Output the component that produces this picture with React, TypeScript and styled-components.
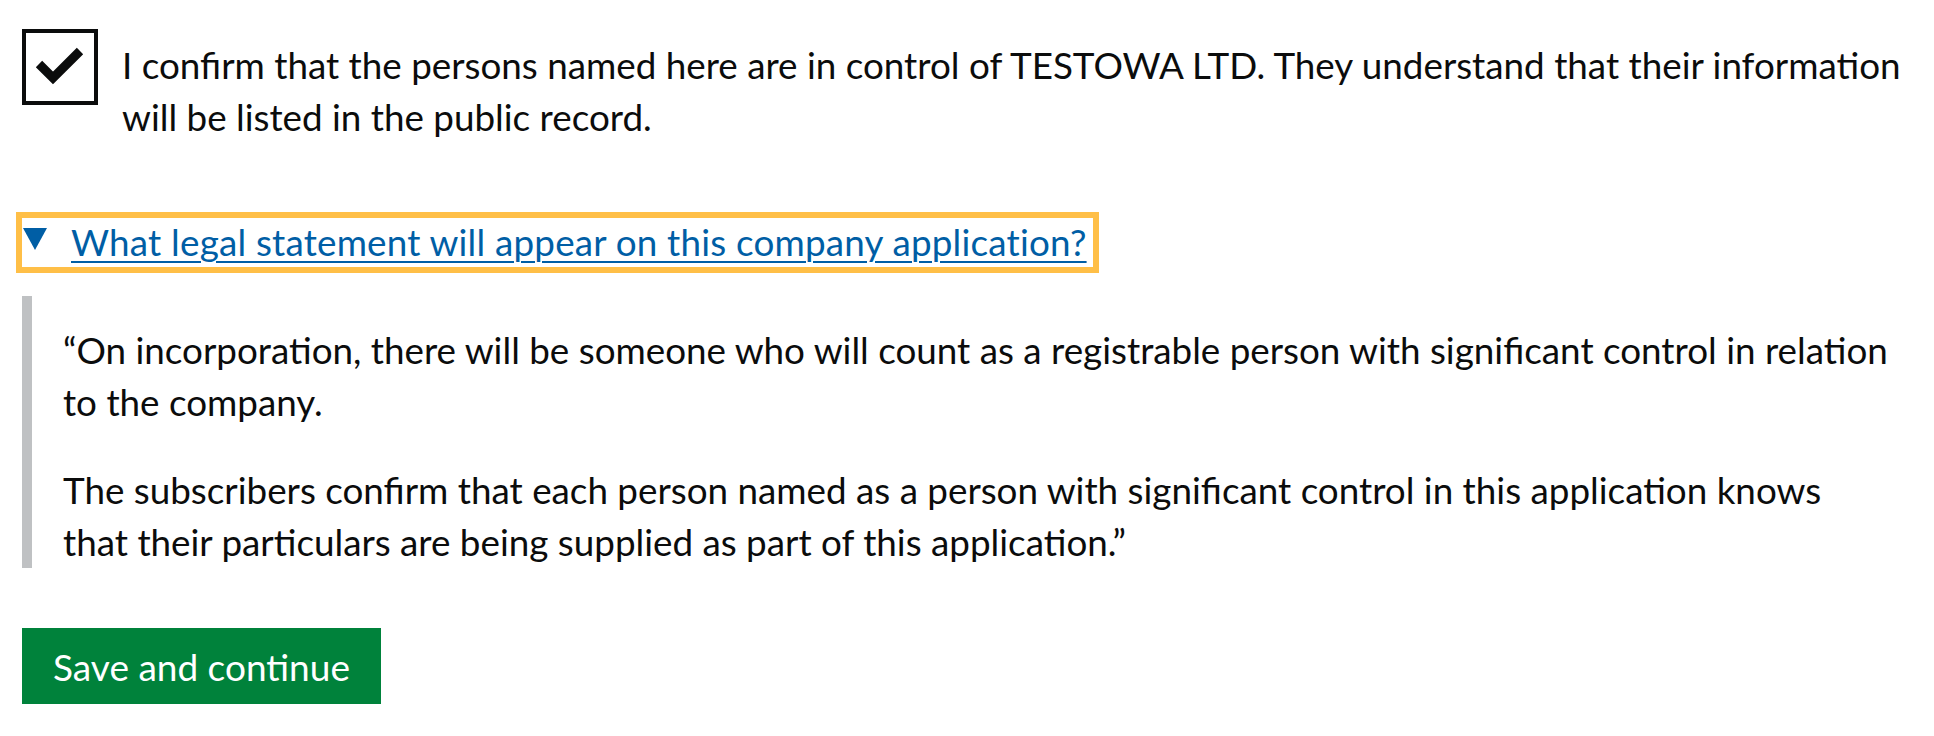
import React from 'react'
import styled, { createGlobalStyle } from 'styled-components'

const GlobalStyle = createGlobalStyle`
  html, body {
    margin: 0;
    padding: 0;
    background: #ffffff;
  }
  body {
    font-family: Lato, "Noto Sans", Arial, sans-serif;
    color: #0b0c0c;
    -webkit-font-smoothing: antialiased;
  }
`

const Page = styled.main`
  padding: 29px 22px 0 22px;
`

const CheckboxRow = styled.div`
  display: flex;
  align-items: flex-start;
`

const CheckBox = styled.div`
  flex: none;
  width: 76px;
  height: 76px;
  box-sizing: border-box;
  border: 4px solid #0b0c0c;
  background: #ffffff;
`

const Label = styled.label`
  padding: 10px 0 0 24px;
  font-size: 36.8px;
  line-height: 52px;
`

const Summary = styled.div`
  display: flex;
  align-items: center;
  width: fit-content;
  margin-top: 75px;
  height: 49px;
  padding: 0 6px 0 1px;
  outline: 6px solid #ffbf47;
  cursor: pointer;
`

const Arrow = styled.svg`
  flex: none;
  display: block;
  margin-right: 24px;
  margin-top: -7px;
`

const SummaryLink = styled.span`
  font-size: 36.8px;
  line-height: 49px;
  letter-spacing: 0.2px;
  color: #005ea5;
  text-decoration: underline;
  text-decoration-thickness: 2px;
  text-underline-offset: 5px;
`

const DetailsText = styled.div`
  margin-top: 29px;
  margin-right: 20px;
  border-left: 10px solid #bfc1c3;
  padding: 28px 0 0 31px;
`

const Paragraph = styled.p`
  margin: 0 0 36px 0;
  font-size: 36.8px;
  line-height: 52px;

  &:last-child {
    margin-bottom: 0;
  }
`

const Button = styled.button`
  display: block;
  margin-top: 60px;
  height: 76px;
  padding: 0 31px;
  border: none;
  border-radius: 0;
  background: #00823b;
  box-shadow: 0 4px 0 #003618;
  color: #ffffff;
  font-family: inherit;
  font-size: 37px;
  line-height: 1;
  cursor: pointer;
`

export default function App() {
  return (
    <>
      <GlobalStyle />
      <Page>
        <CheckboxRow>
          <CheckBox>
            <svg width="68" height="68" viewBox="0 0 68 68" style={{ display: 'block' }}>
              <polyline
                points="13,31 27,45 54,18"
                fill="none"
                stroke="#0b0c0c"
                strokeWidth="9"
                strokeLinejoin="miter"
              />
            </svg>
          </CheckBox>
          <Label>
            I confirm that the persons named here are in control of TESTOWA LTD. They understand that their information will be listed in the public record.
          </Label>
        </CheckboxRow>

        <Summary>
          <Arrow width="24" height="22" viewBox="0 0 24 22">
            <polygon points="0,0 24,0 12,22" fill="#005ea5" />
          </Arrow>
          <SummaryLink>What legal statement will appear on this company application?</SummaryLink>
        </Summary>

        <DetailsText>
          <Paragraph>
            “On incorporation, there will be someone who will count as a registrable person with significant control in relation to the company.
          </Paragraph>
          <Paragraph>
            The subscribers confirm that each person named as a person with significant control in this application knows that their particulars are being supplied as part of this application.”
          </Paragraph>
        </DetailsText>

        <Button type="button">Save and continue</Button>
      </Page>
    </>
  )
}
